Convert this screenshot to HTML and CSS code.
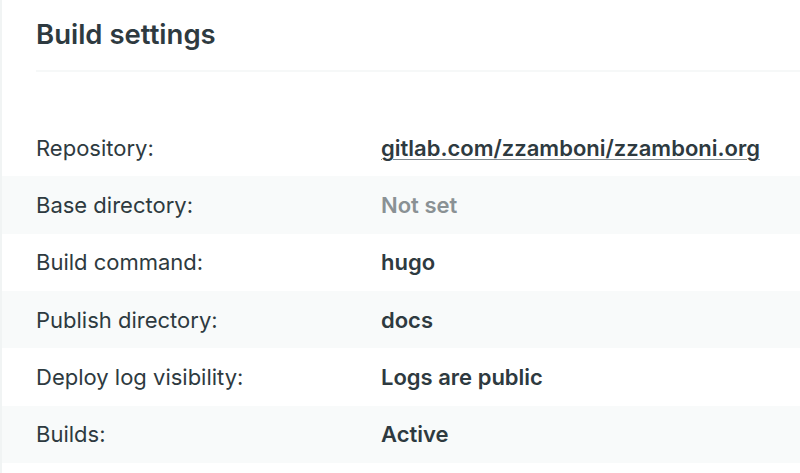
FILE: index.html
```html
<!DOCTYPE html>
<html lang="en">
<head>
<meta charset="utf-8">
<title>Build settings</title>
<link rel="stylesheet" href="styles.css">
</head>
<body>
<section class="panel">
  <header class="panel-header">
    <h1 class="panel-title">Build settings</h1>
  </header>
  <dl class="settings">
    <div class="row">
      <dt class="label">Repository:</dt>
      <dd class="value"><a class="repo-link" href="#">gitlab.com/zzamboni/zzamboni.org</a></dd>
    </div>
    <div class="row alt">
      <dt class="label">Base directory:</dt>
      <dd class="value muted">Not set</dd>
    </div>
    <div class="row">
      <dt class="label">Build command:</dt>
      <dd class="value">hugo</dd>
    </div>
    <div class="row alt">
      <dt class="label">Publish directory:</dt>
      <dd class="value">docs</dd>
    </div>
    <div class="row">
      <dt class="label">Deploy log visibility:</dt>
      <dd class="value">Logs are public</dd>
    </div>
    <div class="row alt">
      <dt class="label">Builds:</dt>
      <dd class="value">Active</dd>
    </div>
  </dl>
</section>
</body>
</html>
```

FILE: styles.css
```css
html, body {
  margin: 0;
  padding: 0;
  background: #ffffff;
}

body {
  font-family: Inter, "Noto Sans", "Liberation Sans", sans-serif;
  color: #2e3a40;
}

.panel {
  border-left: 2px solid #f1f4f4;
  min-height: 473px;
  box-sizing: border-box;
}

.panel-header {
  margin-left: 34px;
  height: 72px;
  box-sizing: border-box;
  padding-top: 14px;
  border-bottom: 2px solid #f6f8f8;
}

.panel-title {
  margin: 0;
  font-size: 27.5px;
  line-height: 40px;
  font-weight: 600;
  color: #2e3a40;
}

.settings {
  margin: 47px 0 0 0;
  padding: 0;
}

.row {
  display: grid;
  grid-template-columns: 345px 1fr;
  align-items: center;
  height: 57.33px;
  padding-left: 34px;
}

.row.alt {
  background: #f8fafa;
}

.label,
.value {
  margin: 0;
  font-size: 22px;
  line-height: 30px;
}

.label {
  font-weight: 400;
  color: #2e3a40;
}

.value {
  font-weight: 600;
  color: #2e3a40;
}

.value.muted {
  color: #8a9194;
}

.repo-link {
  color: #2e3a40;
  text-decoration: underline;
  text-decoration-thickness: 1px;
  text-underline-offset: 3px;
  text-decoration-color: #80898d;
}
```
